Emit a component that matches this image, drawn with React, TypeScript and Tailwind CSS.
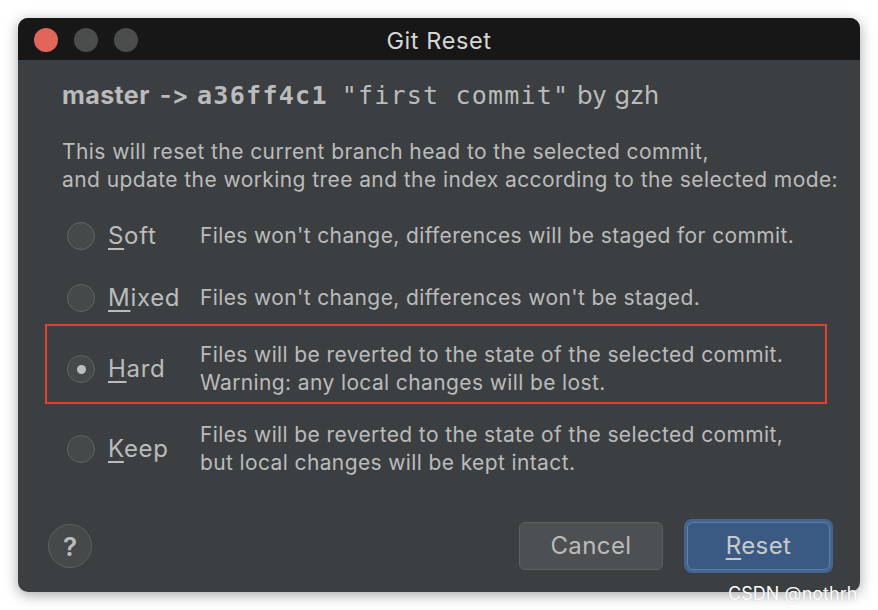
const ui = {
  fontFamily: 'Inter, "Noto Sans", "Liberation Sans", sans-serif',
  fontFeatureSettings: '"calt" 0, "liga" 0',
};
const mono = { fontFamily: '"DejaVu Sans Mono", "Liberation Mono", monospace' };

function Radio({ checked }: { checked?: boolean }) {
  return (
    <span className="flex h-[28px] w-[28px] shrink-0 items-center justify-center rounded-full border-[1.5px] border-[#626565] bg-[#45494a]">
      {checked ? <span className="h-[9px] w-[9px] rounded-full bg-[#bdbdbd]" /> : null}
    </span>
  );
}

function Option({
  mnemonic,
  rest,
  lines,
  checked,
  className,
}: {
  mnemonic: string;
  rest: string;
  lines: string[];
  checked?: boolean;
  className?: string;
}) {
  return (
    <div className={"flex items-center pl-[49px] " + (className ?? "")}>
      <Radio checked={checked} />
      <span className="ml-[13px] w-[92px] shrink-0 text-[24px] leading-[28px] tracking-[0.7px] text-[#bbbbbb]">
        <span className="underline decoration-[1.5px] underline-offset-[4px]">{mnemonic}</span>
        {rest}
      </span>
      <div className="whitespace-nowrap text-[21px] leading-[28px] tracking-[0.38px] text-[#bbbbbb]">
        {lines.map((l) => (
          <div key={l}>{l}</div>
        ))}
      </div>
    </div>
  );
}

export default function App() {
  return (
    <div className="relative h-[610px] w-[878px] overflow-hidden bg-white pl-[18px] pt-[18px]" style={ui}>
      <div className="relative flex h-[574px] w-[842px] flex-col overflow-hidden rounded-[10px] bg-[#3c3f41] shadow-[0_3px_14px_rgba(0,0,0,0.35)]">
        <div className="relative flex h-[42px] shrink-0 items-center justify-center bg-[#171717] pt-[3px]">
          <div className="absolute left-[16px] top-[10px] flex gap-[16px]">
            <span className="h-[24px] w-[24px] rounded-full bg-[#e0655a]" />
            <span className="h-[24px] w-[24px] rounded-full bg-[#4b4d4d]" />
            <span className="h-[24px] w-[24px] rounded-full bg-[#4b4d4d]" />
          </div>
          <span className="text-[23.5px] tracking-[0.6px] text-[#d6d6d6]">Git Reset</span>
        </div>

        <div className="mt-[19px] flex items-baseline whitespace-nowrap px-[44px] text-[25px] leading-[32px] tracking-[0.4px] text-[#bbbbbb]">
          <span className="font-bold">master</span>
          <span className="ml-[10px] font-semibold">-&gt;</span>
          <span className="ml-[8px] font-bold tracking-[1.3px]" style={mono}>a36ff4c1</span>
          <span className="ml-[14px] tracking-[1.2px]" style={mono}>"first commit"</span>
          <span className="ml-[8px]">by gzh</span>
        </div>

        <div className="mt-[26px] whitespace-nowrap pl-[44px] text-[21px] leading-[28px] tracking-[0.42px] text-[#bbbbbb]">
          <div>This will reset the current branch head to the selected commit,</div>
          <div>and update the working tree and the index according to the selected mode:</div>
        </div>

        <Option
          className="mt-[22px] h-[40px]"
          mnemonic="S"
          rest="oft"
          lines={["Files won't change, differences will be staged for commit."]}
        />
        <Option
          className="mt-[22px] h-[40px]"
          mnemonic="M"
          rest="ixed"
          lines={["Files won't change, differences won't be staged."]}
        />
        <Option
          className="mt-[23px] h-[56px]"
          mnemonic="H"
          rest="ard"
          checked
          lines={["Files will be reverted to the state of the selected commit.", "Warning: any local changes will be lost."]}
        />
        <Option
          className="mt-[24px] h-[56px]"
          mnemonic="K"
          rest="eep"
          lines={["Files will be reverted to the state of the selected commit,", "but local changes will be kept intact."]}
        />

        <div className="mt-auto mb-[19px] flex items-center pl-[30px] pr-[27px]">
          <span className="flex h-[44px] w-[44px] items-center justify-center rounded-full border-[1.5px] border-[#5e6060] bg-[#45494a] text-[26px] font-semibold text-[#bbbbbb]">
            ?
          </span>
          <div className="ml-auto flex items-center gap-[21px]">
            <button className="h-[48px] w-[144px] rounded-[6px] border border-[#5e6060] bg-[#4c5052] text-[24px] tracking-[0.4px] text-[#bbbbbb]">
              Cancel
            </button>
            <div className="rounded-[8px] bg-[#44658f] p-[3px]">
              <button className="h-[48px] w-[143px] rounded-[6px] border border-[#5b7fae] bg-[#3b5a83] text-[24px] tracking-[0.4px] text-[#c9c9c9]">
                <span className="underline decoration-[1.5px] underline-offset-[4px]">R</span>eset
              </button>
            </div>
          </div>
        </div>

        <div className="pointer-events-none absolute left-[27px] top-[306px] h-[80px] w-[782px] border-[2.5px] border-[#e5402b]" />
      </div>

      <span className="absolute left-[728px] top-[580px] whitespace-nowrap text-[18px] text-white [text-shadow:0_0_1px_rgba(0,0,0,0.25)]">
        CSDN @nothrh
      </span>
    </div>
  );
}
